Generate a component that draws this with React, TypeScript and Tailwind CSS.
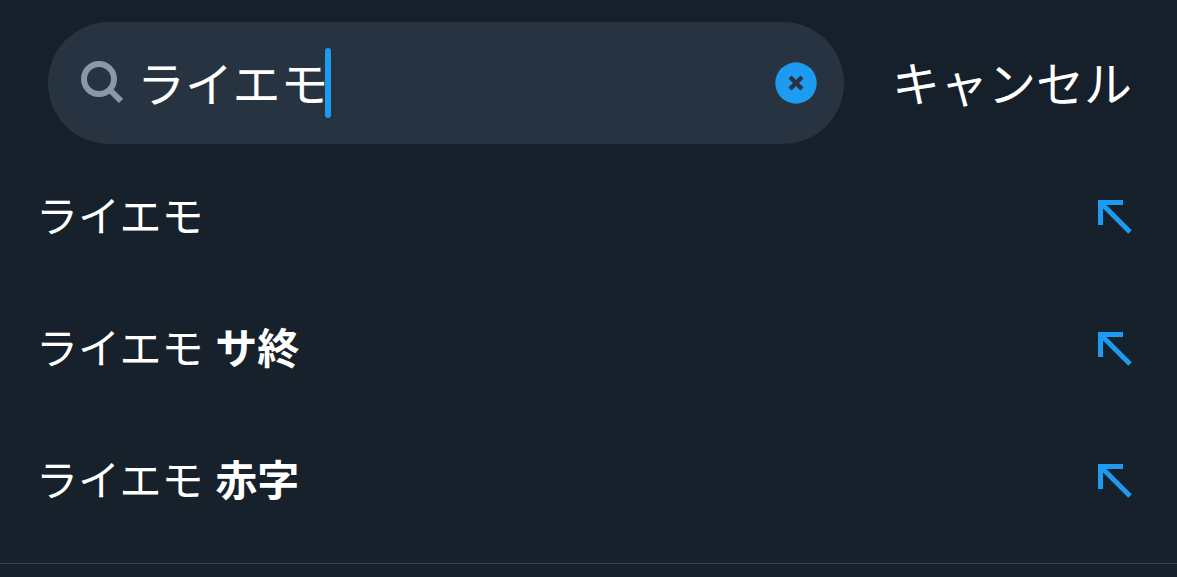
import React, { useState } from 'react';

const suggestions = [
  { typed: 'ライエモ', rest: '' },
  { typed: 'ライエモ', rest: 'サ終' },
  { typed: 'ライエモ', rest: '赤字' },
];

const SearchIcon = () => (
  <svg width="43" height="44" viewBox="0 0 43 44" fill="none" stroke="#8b98a5" className="shrink-0" aria-hidden="true">
    <circle cx="19" cy="18" r="15" strokeWidth="6" />
    <path d="M29.5 28.5L41 40" strokeWidth="6" />
  </svg>
);

const ClearIcon = () => (
  <svg width="42" height="42" viewBox="0 0 42 42" fill="none" aria-hidden="true">
    <circle cx="21" cy="21" r="20.7" fill="#1d9bf0" />
    <path d="M15 15L27 27M27 15L15 27" stroke="#273340" strokeWidth="4.4" />
  </svg>
);

const FillArrowIcon = () => (
  <svg width="34" height="36" viewBox="0 0 34 36" fill="none" stroke="#1d9bf0" strokeWidth="5" aria-hidden="true">
    <path d="M25 4.5H2.5V27" />
    <path d="M3 5L32 34" />
  </svg>
);

const App: React.FC = () => {
  const [query, setQuery] = useState('ライエモ');

  return (
    <div className="min-h-screen bg-[#17212b] text-white font-['Noto_Sans_CJK_JP',sans-serif]">
      <header className="flex items-center bg-[#15202a] pt-[22px] pb-1 pl-12 pr-[45px]">
        <div className="flex h-[122px] min-w-0 flex-1 items-center rounded-full bg-[#273340] pl-8 pr-[27px]">
          <label className="flex flex-1 items-center">
            <SearchIcon />
            <input
              type="text"
              aria-label="検索"
              value={query}
              onChange={(e) => setQuery(e.target.value)}
              className="ml-3.5 h-[70px] field-sizing-content bg-transparent pb-1 text-[48px] caret-transparent outline-none"
            />
            <span className="-ml-1 h-[70px] w-1.5 rounded-full bg-[#1d9bf0]" />
          </label>
          <button type="button" aria-label="クリア" onClick={() => setQuery('')}>
            <ClearIcon />
          </button>
        </div>
        <button type="button" className="ml-12 shrink-0 pb-1 text-[48px] leading-[70px]">
          キャンセル
        </button>
      </header>

      <ul className="border-b border-[#38444d] pt-0.5 pb-[17px]">
        {suggestions.map(({ typed, rest }) => (
          <li key={typed + rest} className="flex h-[132px] items-center justify-between pl-9 pr-[45px]">
            <a href="#" className="flex-1 pb-1 text-[42px] leading-[60px]">
              {typed}
              {rest && <b className="ml-0.5 font-bold"> {rest}</b>}
            </a>
            <button type="button" aria-label={`${typed} ${rest}`}>
              <FillArrowIcon />
            </button>
          </li>
        ))}
      </ul>
    </div>
  );
};

export default App;
